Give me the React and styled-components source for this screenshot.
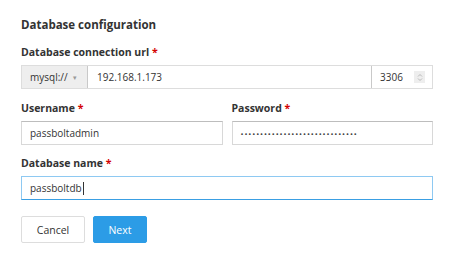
import React from "react";
import styled, { createGlobalStyle } from "styled-components";

const GlobalStyle = createGlobalStyle`
  body {
    margin: 0;
    background: #ffffff;
    font-family: "Open Sans", "Liberation Sans", sans-serif;
    color: #333333;
  }
`;

const App = () => {
  return (
    <>
      <GlobalStyle />
      <Page>
        <Title>Database configuration</Title>

        <Field>
          <Label>
            Database connection url <Required>*</Required>
          </Label>
          <UrlRow>
            <Scheme>
              mysql:// <Caret>▾</Caret>
            </Scheme>
            <Host>192.168.1.173</Host>
            <Port>
              3306
              <Spinner>
                <svg width="6" height="9" viewBox="0 0 6 9">
                  <path d="M1 3.5 L3 1.5 L5 3.5" fill="none" stroke="#a9a9a9" strokeWidth="0.8" />
                  <path d="M1 5.5 L3 7.5 L5 5.5" fill="none" stroke="#a9a9a9" strokeWidth="0.8" />
                </svg>
              </Spinner>
            </Port>
          </UrlRow>
        </Field>

        <Columns>
          <Field $top={11} $grow>
            <Label>
              Username <Required>*</Required>
            </Label>
            <Input>passboltadmin</Input>
          </Field>
          <Field $top={11} $grow>
            <Label>
              Password <Required>*</Required>
            </Label>
            <Input>
              <Dots>{"•".repeat(30)}</Dots>
            </Input>
          </Field>
        </Columns>

        <Field $top={10}>
          <Label>
            Database name <Required>*</Required>
          </Label>
          <Input $focused>
            passboltdb<TextCursor />
          </Input>
        </Field>

        <Actions>
          <Button $width={64}>Cancel</Button>
          <Button $width={54} $primary>
            Next
          </Button>
        </Actions>
      </Page>
    </>
  );
};

export default App;

const Page = styled.div`
  width: 468px;
  height: 277px;
  box-sizing: border-box;
  padding: 16px 35px 0 21px;
  display: flex;
  flex-direction: column;
`;

const Title = styled.div`
  font-size: 11.5px;
  font-weight: 700;
  line-height: 18px;
  color: #333333;
`;

const Field = styled.div`
  display: flex;
  flex-direction: column;
  gap: 5px;
  margin-top: ${(p) => (p.$top !== undefined ? p.$top : 10)}px;
  flex: ${(p) => (p.$grow ? 1 : "none")};
`;

const Label = styled.div`
  font-size: 10.5px;
  font-weight: 700;
  line-height: 16px;
  color: #333333;
`;

const Required = styled.span`
  color: #d40101;
`;

const UrlRow = styled.div`
  display: flex;
  height: 24px;
  border: 1px solid #dddddd;
  box-sizing: border-box;
`;

const Scheme = styled.div`
  width: 66px;
  display: flex;
  align-items: center;
  padding-left: 8px;
  box-sizing: border-box;
  background: #eeeeee;
  border-right: 1px solid #c9c9c9;
  font-size: 10px;
  color: #333333;
  gap: 5px;
`;

const Caret = styled.span`
  font-size: 7px;
  color: #999999;
`;

const Host = styled.div`
  flex: 1;
  display: flex;
  align-items: center;
  padding-left: 9px;
  font-size: 10px;
  color: #333333;
`;

const Port = styled.div`
  width: 61px;
  box-sizing: border-box;
  display: flex;
  align-items: center;
  justify-content: space-between;
  padding: 0 7px 0 8px;
  border-left: 1px solid #c9c9c9;
  font-size: 10px;
  color: #333333;
`;

const Spinner = styled.div`
  width: 11px;
  height: 12px;
  background: #eeeeee;
  display: flex;
  align-items: center;
  justify-content: center;
`;

const Columns = styled.div`
  display: flex;
  gap: 9px;
`;

const Input = styled.div`
  height: 24px;
  box-sizing: border-box;
  display: flex;
  align-items: center;
  padding-left: 8px;
  border: 1px solid ${(p) => (p.$focused ? "#8ec9f2" : "#d8d8d8")};
  border-top-color: ${(p) => (p.$focused ? "#8ec9f2" : "#bdbdbd")};
  border-bottom-color: ${(p) => (p.$focused ? "#3a9fe3" : "#d8d8d8")};
  font-size: 10px;
  color: #333333;
`;

const Dots = styled.span`
  font-size: 8px;
  letter-spacing: 0.9px;
  color: #444444;
  -webkit-font-smoothing: antialiased;
`;

const TextCursor = styled.span`
  display: inline-block;
  width: 1px;
  height: 13px;
  background: #333333;
  margin-left: 1px;
`;

const Actions = styled.div`
  display: flex;
  gap: 8px;
  margin-top: 16px;
`;

const Button = styled.div`
  width: ${(p) => p.$width}px;
  height: 27px;
  box-sizing: border-box;
  display: flex;
  align-items: center;
  justify-content: center;
  font-size: 10.5px;
  border-radius: 2px;
  background: ${(p) => (p.$primary ? "#2c9ce6" : "#ffffff")};
  color: ${(p) => (p.$primary ? "#ffffff" : "#333333")};
  border: 1px solid ${(p) => (p.$primary ? "#2c9ce6" : "#dddddd")};
`;
